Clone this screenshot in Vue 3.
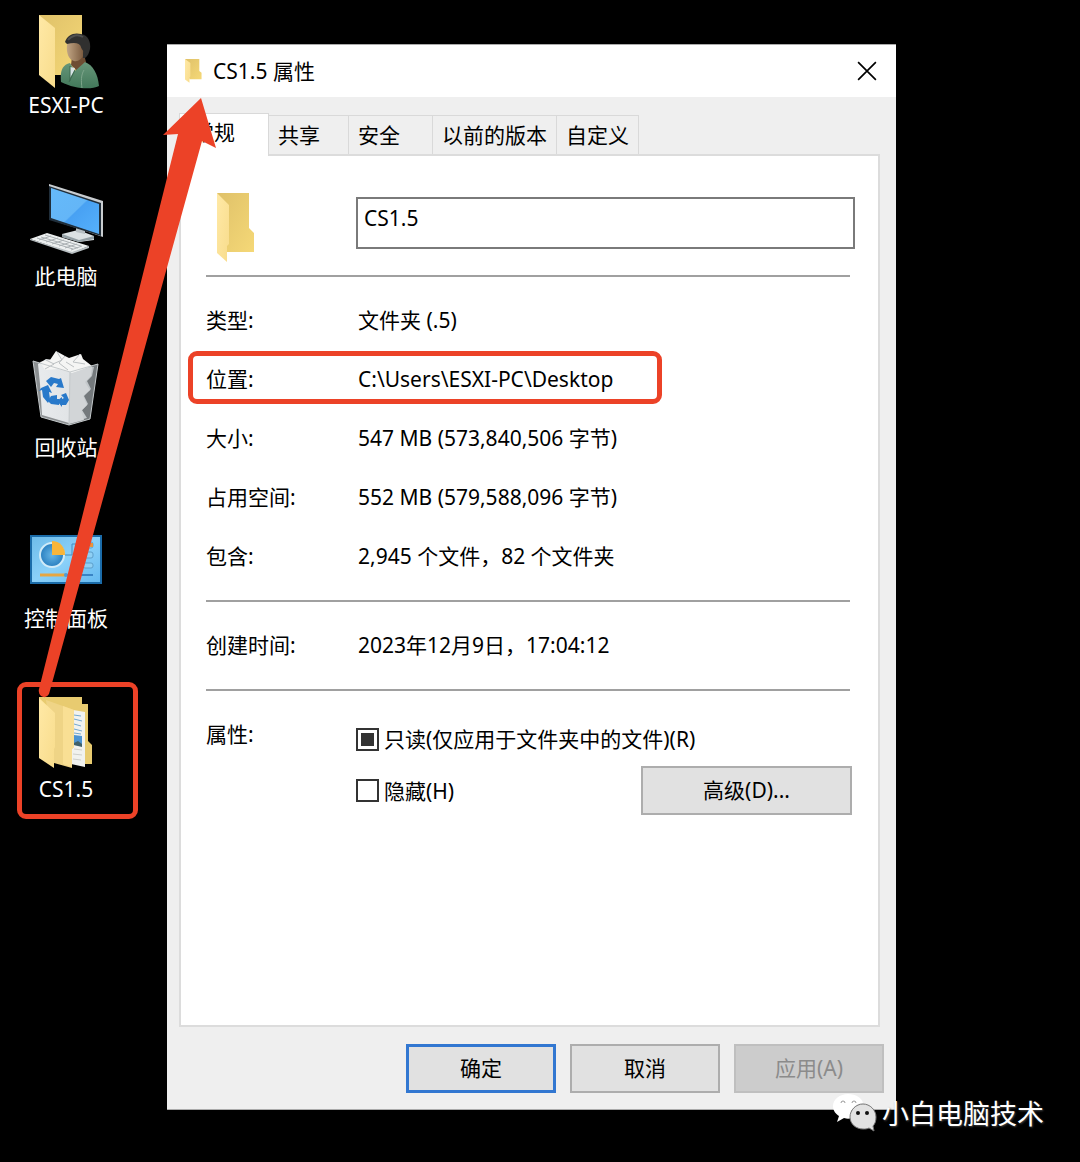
<template>
  <main class="desktop">
    <nav class="shortcuts" aria-label="桌面">
      <a v-for="item in shortcuts" :key="item.id" href="#" class="shortcut" :class="{ marked: item.marked }">
        <svg v-if="item.id === 'user'" class="shortcut-icon" viewBox="0 0 80 80">
          <defs>
            <linearGradient id="folderBack" x1="0" x2="1" y1="0" y2="1">
              <stop offset="0" stop-color="#dfc169" />
              <stop offset="1" stop-color="#f5d877" />
            </linearGradient>
            <linearGradient id="folderFront" x1="0" x2="1" y1="0" y2="1">
              <stop offset="0" stop-color="#ffe9a6" />
              <stop offset="1" stop-color="#f8dc8c" />
            </linearGradient>
            <linearGradient id="face" x1="0" x2="1">
              <stop offset="0" stop-color="#c1a584" />
              <stop offset="1" stop-color="#735338" />
            </linearGradient>
            <linearGradient id="coat" x1="0" x2="0" y1="0" y2="1">
              <stop offset="0" stop-color="#68977a" />
              <stop offset="1" stop-color="#42785a" />
            </linearGradient>
          </defs>
          <path d="M13 6h43v60H13z" fill="url(#folderBack)" />
          <path d="M13 6l16 13v60L13 66z" fill="url(#folderFront)" />
          <path d="M46 48l11-6 3 11-9 9-6-6z" fill="#6e4d33" />
          <path d="M35 73c-1-11 1-17 9-19l5 8 10-9c8 3 13 12 14 24-8 4-24 3-38-4z" fill="url(#coat)" />
          <path d="M44 58l5 1-1 3-4 7z" fill="#d8e4e6" />
          <path d="M44 57v15M49 61l-6 12" fill="none" stroke="#3c684f" />
          <path d="M58 61c-3 5-3 11-2 18" fill="none" stroke="#7ea58b" />
          <path d="M41 36c1-5 7-7 12-6 6 1 7 8 5 15-2 5-6 8-10 7-5-1-8-8-7-16z" fill="url(#face)" />
          <path d="M39 33c2-7 9-10 16-8 7 1 10 8 9 15-1 4-2 7-5 9h-2v-5c1-3-2-4-2-6-1-4-6-5-14-3z" fill="#30302f" />
          <path d="M42 31c4-5 10-6 15-3" fill="none" stroke="#50504f" stroke-width="2" />
        </svg>
        <svg v-else-if="item.id === 'computer'" class="shortcut-icon" viewBox="0 0 80 80">
          <defs>
            <linearGradient id="screen" x1="0" x2="1" y1="0" y2="1">
              <stop offset="0" stop-color="#65bafa" />
              <stop offset=".5" stop-color="#64b6f7" />
              <stop offset=".52" stop-color="#48a1f3" />
              <stop offset="1" stop-color="#56b1fc" />
            </linearGradient>
          </defs>
          <path d="M36 54l16-4 16 6v4l-15 2-17-5z" fill="#dce2e4" />
          <path d="M36 54l17 6 15-4v3l-15 3-17-5z" fill="#94a0a5" />
          <path d="M50 47h9v7l-9-2z" fill="#b7bfc3" />
          <path d="M23 4l54 17v36l-3-1-51-17z" fill="#c9cdd0" />
          <path d="M23 6l52 17v33L23 40z" fill="#202e3a" />
          <path d="M25 8l48 16v30L25 38z" fill="url(#screen)" />
          <path d="M4 59l17-6 42 13-17 7z" fill="#edf0f0" />
          <path d="M4 59l42 13 17-6v2l-17 6L4 60z" fill="#b9c0c3" />
          <path d="M11 58l36 11M15 57l37 11M19 55l36 11M13 60l12-4M20 62l12-4M26 64l12-4M33 66l12-4M39 68l12-4M45 70l11-4" fill="none" stroke="#abb1b4" />
        </svg>
        <svg v-else-if="item.id === 'bin'" class="shortcut-icon" viewBox="0 0 80 80">
          <defs>
            <linearGradient id="binSide">
              <stop stop-color="#e8ebed" />
              <stop offset=".55" stop-color="#e1e4e6" />
              <stop offset="1" stop-color="#b8bdc0" />
            </linearGradient>
          </defs>
          <path d="M7 10l37 11-1 53-28-8z" fill="#8b8f91" />
          <path d="M44 21l28-8-8 55-21 6z" fill="#74797c" />
          <path d="M12 13l8-5 22 3 26 5-2 9-5 5 4 8-7 7 4 8-6 6 5 8-18 5-27-8-2-31z" fill="url(#binSide)" />
          <path d="M44 21l22-5-1 9-6 6 5 8-7 6 4 9-6 6 3 9-15 4z" fill="#d2d5d7" />
          <path d="M14 11l10-2 6-9 9 5 4 2 12-4 2 5 9 7-20 7-14-4-13 1z" fill="#f5f5f4" />
          <path d="M31 1l5 8-9 4M54 3l-7 8 12 2M39 5l-6 7 9 7M20 9l8 4-9 5M48 16l-8-5" fill="none" stroke="#bdc1c3" />
          <path d="M7 10l37 11 28-8M7 10l8 56 28 8 21-6 8-55M44 21l-1 53" fill="none" stroke="#c4c9cb" />
          <g fill="#2879ca">
            <path d="M20 30l5-4 8 2 2-1 3 10-8-1 2-3-4-1-3 4z" />
            <path d="M15 37l7-3 4 8-3-1 1 7-2 4-5-6-1-7-3 1z" />
            <path d="M25 45l6-1v4h2v6l-8-1-3-3zM35 44l5-2 3 7-3 5h-4v2l-5-6 5-4v2l2-1z" />
          </g>
        </svg>
        <svg v-else-if="item.id === 'control'" class="shortcut-icon" viewBox="0 0 80 80">
          <defs>
            <linearGradient id="panelBg" x1="0" x2="1" y1="0" y2="1">
              <stop stop-color="#6dbbe9" />
              <stop offset=".5" stop-color="#8bd1f9" />
              <stop offset="1" stop-color="#64b9f0" />
            </linearGradient>
            <radialGradient id="pie">
              <stop stop-color="#66b5e5" />
              <stop offset="1" stop-color="#297fc0" />
            </radialGradient>
          </defs>
          <rect x="5" y="14" width="70" height="47" fill="url(#panelBg)" stroke="#1b6ca9" stroke-width="2" />
          <circle cx="26" cy="33" r="12" fill="url(#pie)" stroke="#d0ebf8" stroke-width="2" />
          <path d="M26 33V19a13 13 0 0 1 13 14z" fill="#f8b53a" />
          <path d="M39 33h7V22h14" fill="none" stroke="#478fc0" />
          <g fill="#8fd0f4" stroke="#5d9fcb">
            <rect x="57" y="20" width="10" height="6" rx="2" />
            <rect x="57" y="30" width="10" height="6" rx="2" />
            <rect x="57" y="41" width="10" height="5" rx="2" />
          </g>
          <path d="M14 53h26" stroke="#e7a642" stroke-width="3" />
          <path d="M40 53h27" stroke="#3984c5" stroke-width="2" />
          <circle cx="40" cy="53" r="2" fill="#4a9edd" />
          <path d="M64 21h3v4h-3z" fill="#e9933b" />
        </svg>
        <svg v-else class="shortcut-icon" viewBox="0 0 80 80">
          <path d="M13 4h43v7h6v37l4 4v19H42L13 65z" fill="#e8cb70" />
          <path d="M47 17l12 2v55l-14-3z" fill="#f1f2ef" />
          <path d="M48 22l7 1M48 26l8 2M48 31l7 2M48 36l8 2M48 40l7 1" stroke="#73a8cf" />
          <path d="M48 42l8 1v10l-8-1z" fill="#4d94d2" />
          <path d="M48 50l4-2 4 3v3l-8-2z" fill="#40616a" />
          <path d="M48 56l8 1M47 61l9 1M47 66l8 1" stroke="#cecfcb" />
          <path d="M20 7l28 10v37l-2 2v19l-18-5z" fill="#efd486" />
          <path d="M37 13l11 4v37l-2 2v18l-9-3z" fill="#f9df94" />
          <path d="M13 5l16 15v34l-1 2v19L13 65z" fill="url(#folderFront)" />
        </svg>
        <span class="shortcut-label">{{ item.label }}</span>
      </a>
    </nav>

    <section class="window" aria-labelledby="window-title">
      <header class="titlebar">
        <svg class="title-icon" viewBox="0 0 38 70" preserveAspectRatio="none">
          <path d="M0 0h32v35l5 5v19H10z" fill="url(#folderBack)" />
          <path d="M0 0l12 12v39l-2 2v16L0 60z" fill="url(#folderFront)" />
        </svg>
        <h1 id="window-title">CS1.5 属性</h1>
        <button class="close" aria-label="关闭">
          <svg viewBox="0 0 18 18"><path d="M1 1l16 16M17 1L1 17" fill="none" stroke="currentColor" stroke-width="1.500" /></svg>
        </button>
      </header>

      <div class="window-body">
        <div class="tabs" role="tablist">
          <button v-for="tab in tabs" :key="tab" role="tab" class="tab" :class="{ active: tab === activeTab }" :aria-selected="tab === activeTab" @click="activeTab = tab">{{ tab }}</button>
        </div>

        <div class="panel" role="tabpanel">
          <div class="name-row">
            <svg class="folder-icon" viewBox="0 0 38 70">
              <path d="M0 0h32v35l5 5v19H10z" fill="url(#folderBack)" />
              <path d="M0 0l12 12v39l-2 2v16L0 60z" fill="url(#folderFront)" />
            </svg>
            <input v-model="folderName" class="name-input" type="text" aria-label="文件夹名称">
          </div>

          <dl class="details">
            <div v-for="row in details" :key="row.label" class="detail" :class="{ marked: row.marked }">
              <dt>{{ row.label }}</dt>
              <dd>{{ row.value }}</dd>
            </div>
          </dl>
          <dl class="details">
            <div class="detail">
              <dt>创建时间:</dt>
              <dd>2023年12月9日，17:04:12</dd>
            </div>
          </dl>

          <div class="attributes">
            <span>属性:</span>
            <div class="options">
              <label class="check">
                <input v-model="readOnly" type="checkbox" :indeterminate="!readOnly">
                <span>只读(仅应用于文件夹中的文件)(R)</span>
              </label>
              <div class="hidden-row">
                <label class="check">
                  <input v-model="hidden" type="checkbox">
                  <span>隐藏(H)</span>
                </label>
                <button class="button advanced">高级(D)...</button>
              </div>
            </div>
          </div>
        </div>

        <footer class="actions">
          <button class="button primary">确定</button>
          <button class="button">取消</button>
          <button class="button" disabled>应用(A)</button>
        </footer>
      </div>
    </section>

    <svg class="arrow" viewBox="0 0 220 700" aria-hidden="true">
      <path d="M201 98l15 50-14-7L49 694q-3 5-8 2-3-3-2-7L178 134l-15 1z" fill="#ec4227" />
    </svg>

    <div class="watermark">
      <svg viewBox="0 0 46 40" aria-hidden="true">
        <path d="M15 0C7 0 0 5 0 12c0 5 3 8 6 10l-2 6 7-4c3 1 5 1 8 0-3-8 3-15 11-15C29 4 23 0 15 0z" fill="#fff" />
        <path d="M30 10c-7 0-13 6-13 13s6 12 13 12c2 0 4 0 6-1l5 3-1-5c2-2 3-5 3-9 0-7-6-13-13-13z" fill="#e2e2e2" stroke="#777" />
        <g fill="none" stroke="#999">
          <path d="M8 9q0-2 2-2t2 2M19 9q0-2 2-2t2 2" />
        </g>
        <circle cx="25" cy="19" r="2" fill="#111" />
        <circle cx="34" cy="19" r="2" fill="#111" />
      </svg>
      <span>小白电脑技术</span>
    </div>
  </main>
</template>

<script setup>
import { ref } from 'vue'

const shortcuts = [
  { id: 'user', label: 'ESXI-PC' },
  { id: 'computer', label: '此电脑' },
  { id: 'bin', label: '回收站' },
  { id: 'control', label: '控制面板' },
  { id: 'folder', label: 'CS1.5', marked: true }
]

const tabs = ['常规', '共享', '安全', '以前的版本', '自定义']
const activeTab = ref('常规')
const folderName = ref('CS1.5')
const readOnly = ref(false)
const hidden = ref(false)

const details = [
  { label: '类型:', value: '文件夹 (.5)' },
  { label: '位置:', value: 'C:\\Users\\ESXI-PC\\Desktop', marked: true },
  { label: '大小:', value: '547 MB (573,840,506 字节)' },
  { label: '占用空间:', value: '552 MB (579,588,096 字节)' },
  { label: '包含:', value: '2,945 个文件，82 个文件夹' }
]
</script>

<style>
body {
  margin: 0;
  background: #000;
}
</style>

<style scoped>
*,
*::before,
*::after {
  box-sizing: border-box;
}

.desktop {
  position: relative;
  display: flex;
  align-items: flex-start;
  min-height: 100vh;
  padding: 0 184px 50px 0;
  background: #000;
  color: #000;
  font-family: "Noto Sans", "Noto Sans CJK SC", sans-serif;
  font-size: 21px;
  line-height: 30px;
}

button,
input {
  font: inherit;
  color: inherit;
}

.shortcuts {
  display: flex;
  flex-direction: column;
  flex: 0 0 167px;
  gap: 60px;
  padding-top: 9px;
}

.shortcut {
  position: relative;
  display: flex;
  flex-direction: column;
  align-items: center;
  width: 132px;
  color: #fff;
  text-decoration: none;
}

.shortcut-icon {
  width: 80px;
  height: 80px;
}

.shortcut-label {
  margin-top: 1px;
}

.shortcut.marked::before {
  content: '';
  position: absolute;
  inset: -11px -6px -15px 17px;
  border: 5px solid #ec4227;
  border-radius: 9px;
}

.window {
  flex: 1;
  min-width: 0;
  margin-top: 44px;
  border: solid #aaa;
  border-width: 1px 0;
  background: #efefef;
}

.titlebar {
  display: flex;
  align-items: center;
  height: 52px;
  padding: 0 19px 0 18px;
  background: #fff;
}

.title-icon {
  width: 17px;
  height: 24px;
  margin-right: 11px;
}

h1 {
  margin: 0;
  font-size: 21px;
  font-weight: 400;
}

.close {
  display: flex;
  margin-left: auto;
  padding: 0;
  border: 0;
  background: none;
}

.close svg {
  width: 20px;
  height: 20px;
}

.window-body {
  padding: 16px 12px;
}

.tabs {
  display: flex;
  align-items: flex-end;
}

.tab {
  height: 39px;
  margin-left: -1px;
  padding: 0 9px 1px;
  border: 1px solid #d9d9d9;
  border-bottom: 0;
  background: #efefef;
  text-align: left;
}

.tab:nth-child(2) {
  width: 81px;
}

.tab:nth-child(3) {
  width: 85px;
}

.tab.active {
  position: relative;
  width: 90px;
  height: 43px;
  margin: 0 0 -2px;
  padding: 0 13px 6px;
  background: #fff;
}

.panel {
  min-height: 873px;
  margin-right: 4px;
  padding: 37px 28px 37px 25px;
  border: 2px solid #dcdcdc;
  background: #fff;
}

.name-row {
  display: flex;
  padding-bottom: 12px;
  border-bottom: 2px solid #a0a0a0;
}

.folder-icon {
  width: 40px;
  height: 70px;
  margin: 0 100px 0 10px;
}

.name-input {
  flex: 1;
  min-width: 0;
  height: 52px;
  margin: 4px -5px 0 0;
  padding: 0 6px 10px;
  border: 2px solid #7a7a7a;
  background: #fff;
}

.details {
  display: grid;
  gap: 29px;
  margin: 0;
  padding: 28px 0 29px;
  border-bottom: 2px solid #a0a0a0;
}

.detail {
  position: relative;
  display: grid;
  grid-template-columns: 152px 1fr;
}

dd {
  margin: 0;
}

.detail.marked::after {
  content: '';
  position: absolute;
  top: -13px;
  left: -18px;
  width: 474px;
  height: 53px;
  border: 5px solid #ec4227;
  border-radius: 9px;
}

.attributes {
  display: grid;
  grid-template-columns: 150px 1fr;
  padding-top: 28px;
}

.options {
  padding-top: 5px;
}

.check {
  display: flex;
  align-items: center;
  gap: 5px;
}

.check input {
  display: grid;
  place-content: center;
  width: 23px;
  height: 23px;
  margin: 0;
  border: 2px solid #333;
  background: #fff;
  appearance: none;
}

.check input:indeterminate::before {
  content: '';
  width: 13px;
  height: 13px;
  background: #333;
}

.check input:checked::before {
  content: '✓';
}

.hidden-row {
  display: flex;
  align-items: center;
  justify-content: space-between;
  margin: 12px -2px 0 0;
}

.button {
  width: 150px;
  height: 49px;
  padding: 0 0 2px;
  border: 2px solid #adadad;
  background: #e1e1e1;
}

.button.advanced {
  width: 211px;
}

.button.primary {
  border: 3px solid #3277d1;
}

.button:disabled {
  border-color: #bfbfbf;
  background: #ccc;
  color: #8b8b8b;
}

.actions {
  display: flex;
  justify-content: flex-end;
  gap: 14px;
  padding-top: 17px;
}

.arrow {
  position: absolute;
  top: 0;
  left: 0;
  width: 220px;
  height: 700px;
  pointer-events: none;
}

.watermark {
  position: absolute;
  right: 36px;
  bottom: 28px;
  display: flex;
  align-items: center;
  gap: 3px;
  color: #fff;
  font-size: 27px;
  line-height: 40px;
  text-shadow: 1px 1px 2px #444;
}

.watermark svg {
  width: 46px;
  height: 40px;
}
</style>
